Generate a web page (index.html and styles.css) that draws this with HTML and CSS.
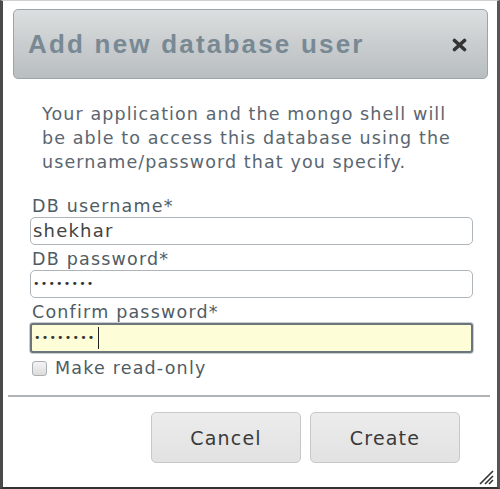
FILE: index.html
```html
<!DOCTYPE html>
<html>
<head>
<meta charset="utf-8">
<link rel="stylesheet" href="styles.css">
</head>
<body>
<div class="dialog">
  <div class="titlebar">
    <span class="title">Add new database user</span>
    <svg class="close" width="15" height="14" viewBox="0 0 15 14">
      <path d="M2.5 2.5 L12.5 11.5 M12.5 2.5 L2.5 11.5" stroke="#333" stroke-width="3.6" stroke-linecap="round"/>
    </svg>
  </div>
  <p class="intro">Your application and the mongo shell will be able to access this database using the username/password that you specify.</p>
  <div class="form">
    <label class="label">DB username*</label>
    <div class="input">shekhar</div>
    <label class="label">DB password*</label>
    <div class="input dots">••••••••</div>
    <label class="label">Confirm password*</label>
    <div class="input dots focus">••••••••<span class="caret"></span></div>
    <div class="check"><span class="box"></span><span>Make read-only</span></div>
  </div>
  <div class="sep"></div>
  <div class="buttons">
    <button class="btn">Cancel</button>
    <button class="btn">Create</button>
  </div>
  <svg class="grip" width="16" height="16" viewBox="0 0 16 16">
    <path d="M2 15 L15 2 M7 15 L15 7 M11 15 L15 11" stroke="#333" stroke-width="1.6"/>
  </svg>
</div>
</body>
</html>
```
FILE: styles.css
```css
html, body { margin: 0; padding: 0; background: #fff; }
.dialog {
  position: relative;
  width: 500px;
  height: 489px;
  box-sizing: border-box;
  border-left: 3px solid #4a4a4a;
  border-right: 3px solid #555;
  border-bottom: 2px solid #333;
  border-top: 1px solid #d0d0d0;
  font-family: "DejaVu Sans", Verdana, sans-serif;
  overflow: hidden;
}
.titlebar {
  margin: 8px 9px 0 10px;
  height: 70px;
  box-sizing: border-box;
  border: 1px solid #9ca4a8;
  border-radius: 5px;
  background: linear-gradient(#dcdfe0, #c9cdcf 50%, #b9bec1);
  display: flex;
  align-items: center;
  justify-content: space-between;
  padding: 0 20px 0 14px;
}
.title {
  font-family: "Liberation Sans", Arial, sans-serif;
  font-weight: bold;
  font-size: 26px;
  color: #798994;
  letter-spacing: 2.2px;
}
.close { margin-top: 2px; }
.intro {
  margin: 23px 35px 0 39px;
  font-size: 17.5px;
  line-height: 24px;
  letter-spacing: 1.1px;
  color: #5a6670;
}
.form {
  margin: 22px 24px 0 27px;
  display: flex;
  flex-direction: column;
}
.label {
  font-size: 17.5px;
  line-height: 21px;
  letter-spacing: 1.2px;
  color: #505c64;
  padding-left: 2px;
}
.input {
  height: 28px;
  box-sizing: border-box;
  border: 1.5px solid #aeb4b8;
  border-radius: 5px;
  font-size: 18px;
  letter-spacing: 1.2px;
  line-height: 25px;
  color: #444;
  padding-left: 2px;
  margin-bottom: 4px;
}
.dots { letter-spacing: 1.2px; font-size: 11px; color: #333; }
.focus {
  height: 30px;
  background: #fdfdd8;
  border: 2px solid #6b757b;
  border-radius: 3px;
  box-shadow: 0 0 0 1px #c9ced1;
  line-height: 26px;
  display: flex;
  align-items: center;
}
.caret {
  display: inline-block;
  width: 1px;
  height: 22px;
  background: #222;
  margin-left: 2px;
}
.check {
  display: flex;
  align-items: center;
  gap: 8px;
  margin-top: 1px;
  margin-left: 2px;
  font-size: 17.5px;
  letter-spacing: 1.2px;
  color: #505c64;
}
.box {
  width: 13px;
  height: 13px;
  border: 1px solid #aab0b4;
  border-radius: 3px;
  background: linear-gradient(#f4f4f4, #dcdcdc);
}
.sep {
  margin: 17px 7px 0 5px;
  height: 2px;
  background: #b0b4b6;
}
.buttons {
  display: flex;
  justify-content: flex-end;
  gap: 9px;
  margin: 15px 37px 0 0;
}
.btn {
  width: 150px;
  height: 51px;
  border: 1px solid #c6c8c9;
  border-radius: 5px;
  background: linear-gradient(#ececec, #e2e2e2);
  font-family: "DejaVu Sans", Verdana, sans-serif;
  font-size: 19px;
  letter-spacing: 1.2px;
  color: #3a3a3a;
}
.grip {
  position: absolute;
  right: 3px;
  bottom: 2px;
}
```
